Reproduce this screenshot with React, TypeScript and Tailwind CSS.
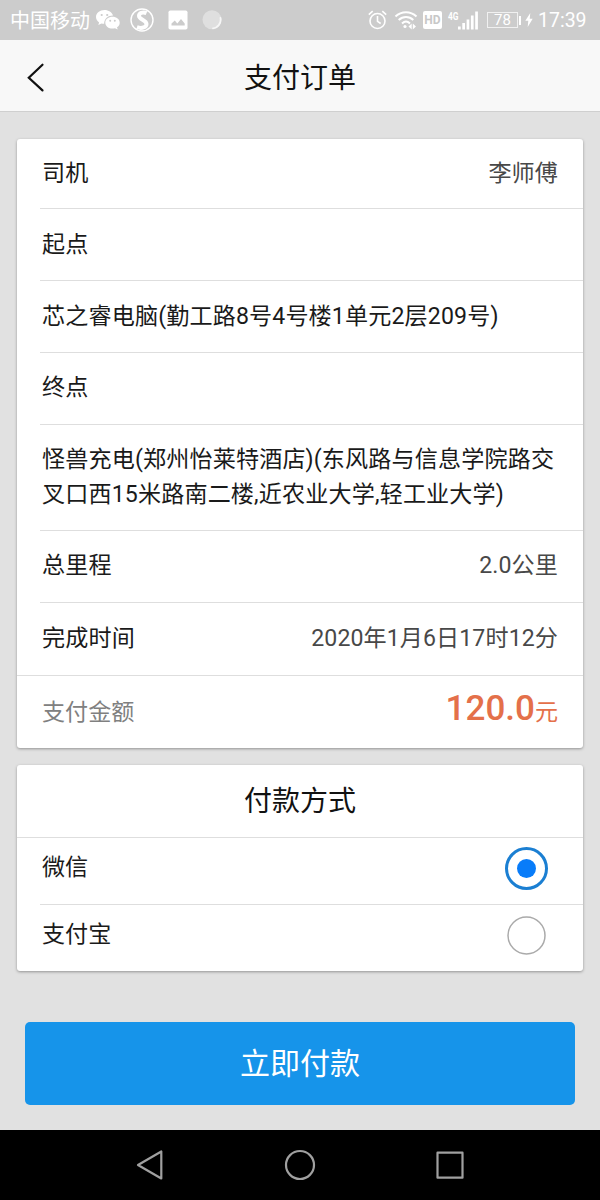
import React from "react";

type RowProps = {
  className: string;
  label: string;
  value?: string;
  divider?: boolean;
};

function Row({ className, label, value, divider = true }: RowProps) {
  return (
    <div
      className={`ml-[23px] flex justify-between border-[#dedede] pl-[2px] pr-[25px] text-[23.1px] leading-[35px] ${
        divider ? "border-b" : ""
      } ${className}`}
    >
      <span className="tracking-[0.14px] text-[#1a1a1a]">{label}</span>
      {value && <span className="whitespace-nowrap tracking-[0.1px] text-[#484848]">{value}</span>}
    </div>
  );
}

function WeChatIcon() {
  return (
    <svg width="24" height="20" viewBox="0 0 24 20" fill="#fff">
      <path d="M8.500 0C3.800 0 0 3.100 0 7c0 2.200 1.200 4.100 3.100 5.400L2.300 15l3.200-1.600c.9.3 1.700.4 2.700.4C8 9 12 5.500 17 5.500 16 2.300 12.600 0 8.500 0Z" />
      <path d="M16.500 6.800c-4 0-7.200 2.600-7.200 5.900s3.200 5.900 7.200 5.900c.9 0 1.700-.1 2.500-.4l2.700 1.400-.7-2.300c1.600-1 2.700-2.700 2.700-4.600 0-3.300-3.200-5.900-7.200-5.900Z" />
      <g fill="#ccc">
        <circle cx="5.700" cy="5" r="1.100" />
        <circle cx="11.200" cy="5" r="1.100" />
        <circle cx="14.200" cy="10.800" r="1" />
        <circle cx="18.800" cy="10.800" r="1" />
      </g>
    </svg>
  );
}

function SogouIcon() {
  return (
    <svg width="24" height="24" viewBox="0 0 24 24" fill="none">
      <circle cx="12" cy="12" r="11" stroke="#fff" strokeWidth="1.400" />
      <path
        d="M16.500 5.200C12.500 3.500 9 5 9 7.900c0 3.600 7.500 4 7.500 8 0 3.300-4.500 5-9.500 3.300"
        stroke="#fff"
        strokeWidth="4"
      />
    </svg>
  );
}

function GalleryIcon() {
  return (
    <svg width="20" height="20" viewBox="0 0 20 20">
      <rect x="0.500" y="0.500" width="19" height="19" rx="1.800" fill="#fff" />
      <path d="M3.500 15.500v-2l3.300-3 2.500 3 3.700-4.500 3.700 4.500v2Z" fill="#ccc" />
    </svg>
  );
}

function SwirlIcon() {
  return (
    <svg width="20" height="20" viewBox="0 0 20 20" fill="none">
      <circle cx="10" cy="9.800" r="9.500" fill="#dfdfdf" />
      <path d="M18.500 8c1 5.500-3 10-7.500 10.300" stroke="#f6f6f6" strokeWidth="1.800" strokeLinecap="round" />
    </svg>
  );
}

function AlarmIcon() {
  return (
    <svg width="19" height="20" viewBox="0 0 19 20" fill="none" stroke="#fff" strokeWidth="1.600">
      <circle cx="9.500" cy="11" r="7.500" />
      <path d="M9.500 6v5.300l3.200 2.200M.8 4.700 4.700 1.200M18.200 4.700l-3.900-3.500" />
    </svg>
  );
}

function WifiIcon() {
  return (
    <svg width="24" height="20" viewBox="0 0 24 20" fill="none" stroke="#fff" strokeWidth="2">
      <path d="M1.500 6.500c6-5.800 15-5.800 21 0M4.700 10c4.200-4 10.400-4 14.600 0M8 13.400c2.400-2.200 5.600-2.200 8 0" />
      <circle cx="11" cy="16.500" r="1.600" fill="#fff" stroke="none" />
      <path d="m17.700 13.500-3.200 3 3.200 3ZM18.800 13.500l3.200 3-3.200 3Z" fill="#fff" stroke="none" />
    </svg>
  );
}

function SignalIcon() {
  return (
    <svg width="20" height="19" viewBox="0 0 20 19" fill="#fff">
      <rect x="0" y="15.500" width="2.700" height="3" />
      <rect x="4.300" y="12" width="2.700" height="6.500" />
      <rect x="8.600" y="8.500" width="2.700" height="10" />
      <rect x="12.900" y="4.500" width="2.700" height="14" />
      <rect x="17.200" y="0.500" width="2.700" height="18" />
    </svg>
  );
}

function StatusBar() {
  return (
    <div className="flex h-10 shrink-0 items-center bg-[#ccc] text-white">
      <span className="ml-[10px] w-[86px] pt-[2px] text-[20px] leading-[38px]">中国移动</span>
      <WeChatIcon />
      <span className="ml-[10px]">
        <SogouIcon />
      </span>
      <span className="ml-[14px]">
        <GalleryIcon />
      </span>
      <span className="ml-[14px]">
        <SwirlIcon />
      </span>
      <div className="ml-auto flex items-center pr-[13px]">
        <AlarmIcon />
        <span className="ml-[7px]">
          <WifiIcon />
        </span>
        <span className="ml-[5px] flex h-[18px] w-[19px] items-center justify-center rounded-[2px] bg-white font-['Roboto'] text-[12px] font-bold text-[#c8c8c8]">
          HD
        </span>
        <svg className="mb-[10px] ml-[6px] overflow-visible" width="10" height="11" viewBox="0 0 10 11">
          <text x="0" y="9.500" fill="#fff" fontFamily="Roboto" fontWeight="700" fontSize="11" textLength="10.500" lengthAdjust="spacingAndGlyphs">
            4G
          </text>
        </svg>
        <span className="mt-[1px]">
          <SignalIcon />
        </span>
        <span className="ml-[9px] flex h-[16px] w-[31px] items-center justify-center border border-white/70 pt-px font-['Roboto'] text-[15px] leading-none">
          78
        </span>
        <span className="ml-[1px] h-[9px] w-[2px] bg-white" />
        <svg className="ml-[4px]" width="8" height="14" viewBox="0 0 8 14" fill="#fff">
          <path d="M5.300 0 .3 7.800h3L2.700 14l5-8.200h-3Z" />
        </svg>
        <span className="ml-[5px] w-[49px] whitespace-nowrap pt-[2px] font-['Roboto'] text-[19.500px] leading-[38px]">
          17:39
        </span>
      </div>
    </div>
  );
}

export default function App() {
  return (
    <div className="flex h-[1200px] w-[600px] flex-col overflow-hidden bg-[#e1e1e1] font-['Roboto','Noto_Sans_CJK_SC',sans-serif]">
      <StatusBar />
      <header className="grid h-[72px] shrink-0 grid-cols-[1fr_auto_1fr] border-b border-[#cfcfcf] bg-[#f8f8f8]">
        <svg className="ml-[26px] mt-[22px]" width="20" height="32" viewBox="0 0 20 32" fill="none">
          <path d="M16.500 2.700 2.800 15.700l13.700 12.700" stroke="#111" strokeWidth="2.200" strokeLinecap="round" />
        </svg>
        <h1 className="h-[71px] text-[28px] leading-[77px] text-[#111]">支付订单</h1>
      </header>

      <main className="flex grow flex-col px-[17px] pt-[27px]">
        <section className="rounded-[3px] bg-white shadow-[0_1px_3px_rgba(0,0,0,0.35)]">
          <Row className="h-[70px] pt-[17px]" label="司机" value="李师傅" />
          <Row className="h-[72px] pt-[18px]" label="起点" />
          <Row className="h-[72px] pt-[18px]" label="芯之睿电脑(勤工路8号4号楼1单元2层209号)" />
          <Row className="h-[72px] pt-[17px]" label="终点" />
          <Row
            className="h-[106px] pt-[17px]"
            label="怪兽充电(郑州怡莱特酒店)(东风路与信息学院路交叉口西15米路南二楼,近农业大学,轻工业大学)"
          />
          <Row className="h-[72px] pt-[17px]" label="总里程" value="2.0公里" />
          <Row className="h-[72px] pt-[18px]" label="完成时间" value="2020年1月6日17时12分" divider={false} />
          <div className="flex h-[73px] items-baseline justify-between border-t border-[#dedede] pl-[25px] pr-[25px] pt-[11px] text-[23.1px] leading-[44px]">
            <span className="text-[#808080]">支付金额</span>
            <span className="text-[#e4704a]">
              <span className="text-[35px] font-medium">120.0</span>元
            </span>
          </div>
        </section>

        <section className="mt-[17px] rounded-[3px] bg-white shadow-[0_1px_3px_rgba(0,0,0,0.35)]">
          <h2 className="h-[73px] border-b border-[#dedede] text-center text-[28px] leading-[73px] text-[#111]">
            付款方式
          </h2>
          <div className="ml-[23px] flex h-[67px] justify-between border-b border-[#dedede] pl-[2px] pr-[35px]">
            <span className="text-[23.1px] leading-[60px] text-[#1a1a1a]">微信</span>
            <span className="mt-[9px] flex size-[43px] items-center justify-center rounded-full border-3 border-[#1b7fd2]">
              <span className="size-[19px] rounded-full bg-[#087cf9]" />
            </span>
          </div>
          <div className="ml-[23px] flex h-[66px] justify-between pl-[2px] pr-[37px]">
            <span className="text-[23.1px] leading-[60px] text-[#1a1a1a]">支付宝</span>
            <svg className="mt-[11px]" width="39" height="39" viewBox="0 0 39 39" fill="none">
              <circle cx="19.500" cy="19.500" r="18.500" stroke="#aaa" strokeWidth="1.500" />
            </svg>
          </div>
        </section>

        <button className="mx-[8px] mt-[51px] h-[83px] rounded-[5px] bg-[#1694ea] text-[30px] leading-[80px] text-white">
          立即付款
        </button>
      </main>

      <nav className="flex h-[70px] shrink-0 items-center justify-center gap-[118px] bg-black">
        <svg width="32" height="36" viewBox="0 0 32 36" fill="none" stroke="#a0a0a0" strokeWidth="2.200" strokeLinejoin="round">
          <path d="M27.300 4.500v27L4 18Z" />
        </svg>
        <svg width="32" height="36" viewBox="0 0 32 36" fill="none" stroke="#a0a0a0" strokeWidth="2.200">
          <circle cx="16" cy="18" r="14" />
        </svg>
        <svg width="32" height="36" viewBox="0 0 32 36" fill="none" stroke="#a0a0a0" strokeWidth="2.200" strokeLinejoin="round">
          <rect x="3.500" y="5.700" width="25" height="25" />
        </svg>
      </nav>
    </div>
  );
}
